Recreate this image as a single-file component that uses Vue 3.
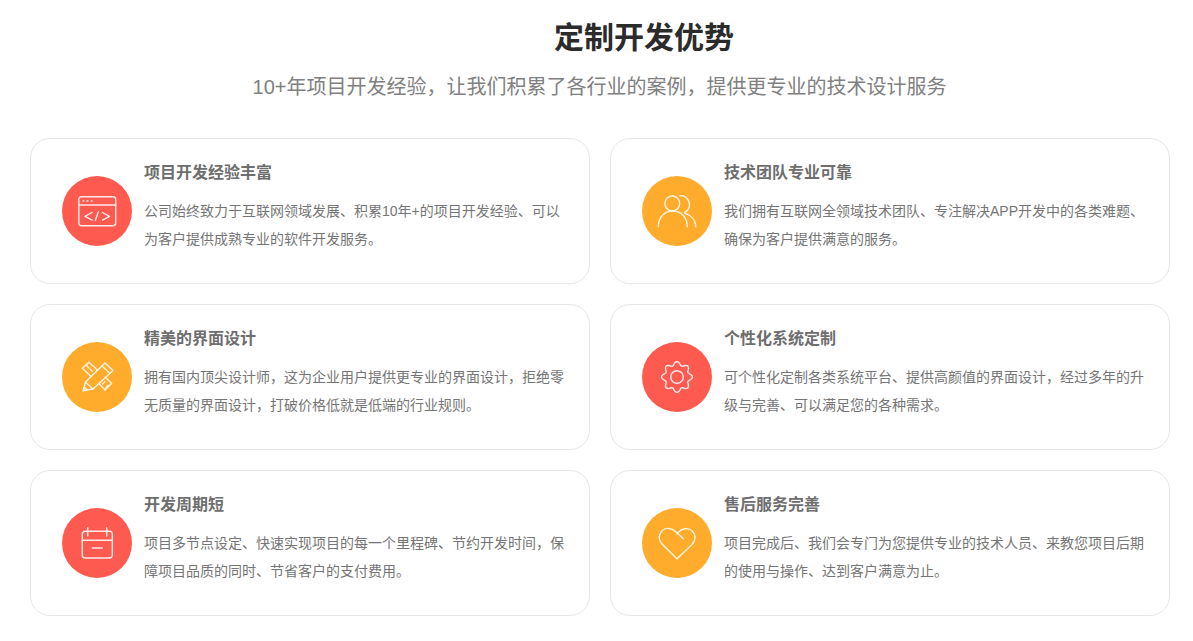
<template>
  <section class="advantage">
    <h2 class="heading">定制开发优势</h2>
    <p class="subheading">10+年项目开发经验，让我们积累了各行业的案例，提供更专业的技术设计服务</p>
    <div class="grid">
      <div class="card" v-for="item in items" :key="item.title">
        <div class="icon" :class="item.color">
          <svg viewBox="0 0 40 40" fill="none" stroke="#fff" stroke-width="1.4" stroke-linecap="round" stroke-linejoin="round" opacity="0.88">
            <path v-for="(d, i) in item.paths" :key="i" :d="d" />
          </svg>
        </div>
        <div class="body">
          <h3 class="title">{{ item.title }}</h3>
          <p class="desc">{{ item.desc }}</p>
        </div>
      </div>
    </div>
  </section>
</template>

<script setup>
// wavy outline for the gear icon
function gearPath(cx, cy, lobes) {
  const pts = []
  for (let i = 0; i < 120; i++) {
    const a = (i / 120) * Math.PI * 2
    const r = 13.6 + 1.8 * Math.cos(lobes * a)
    pts.push(`${(cx + r * Math.cos(a)).toFixed(2)} ${(cy + r * Math.sin(a)).toFixed(2)}`)
  }
  return `M${pts.join('L')}Z`
}

const items = [
  {
    title: '项目开发经验丰富',
    desc: '公司始终致力于互联网领域发展、积累10年+的项目开发经验、可以为客户提供成熟专业的软件开发服务。',
    color: 'red',
    paths: [
      'M4.500 5.700h31.500a2.700 2.700 0 0 1 2.700 2.700v23.600a2.700 2.700 0 0 1-2.700 2.700H4.500a2.700 2.700 0 0 1-2.700-2.700V8.400a2.700 2.700 0 0 1 2.700-2.700z',
      'M1.800 14h36.900',
      'M6 10h1M10 10h1M14.300 10h1',
      'M15 21.500l-7 3.800 7 3.800',
      'M25.500 21.500l7 3.800-7 3.800',
      'M21.300 21l-3 8.500'
    ]
  },
  {
    title: '技术团队专业可靠',
    desc: '我们拥有互联网全领域技术团队、专注解决APP开发中的各类难题、确保为客户提供满意的服务。',
    color: 'orange',
    paths: [
      'M15.300 5a7.400 7.400 0 1 1 0 14.800a7.400 7.400 0 0 1 0-14.800z',
      'M1.300 35.700C1.300 27 7 20 15.800 20S30.300 27 30.300 35.700',
      'M23 4.700c5-.5 9.500 3.500 9.500 8.800 0 3.500-2 6.500-5 8',
      'M27.500 22c6.500 2 11.200 7 11.200 13.700'
    ]
  },
  {
    title: '精美的界面设计',
    desc: '拥有国内顶尖设计师，这为企业用户提供更专业的界面设计，拒绝零无质量的界面设计，打破价格低就是低端的行业规则。',
    color: 'orange',
    paths: [
      'M6.300 33.700L8.500 25 28 6l8 7.500L16 32z',
      'M8.500 25l7.500 7',
      'M25 9l8 7.500',
      'M6.300 33.700l1-3.600 2.600 2.600z',
      'M20.400 13L12 5.300l-6.700 6 8.800 8.100',
      'M28.200 20.200l6.500 6.100L28 33l-6.100-6.400',
      'M9.500 8.500l2.200 2.200M13 12l2.200 2.200M25.500 27l2.200-2.200M29 30.500l2.200-2.200'
    ]
  },
  {
    title: '个性化系统定制',
    desc: '可个性化定制各类系统平台、提供高颜值的界面设计，经过多年的升级与完善、可以满足您的各种需求。',
    color: 'red',
    paths: [
      gearPath(20, 20, 8),
      'M20 13.700a6.300 6.300 0 1 1 0 12.600a6.300 6.300 0 0 1 0-12.600z'
    ]
  },
  {
    title: '开发周期短',
    desc: '项目多节点设定、快速实现项目的每一个里程碑、节约开发时间，保障项目品质的同时、节省客户的支付费用。',
    color: 'red',
    paths: [
      'M8.300 8.300h24a3 3 0 0 1 3 3V32a3 3 0 0 1-3 3h-24a3 3 0 0 1-3-3V11.300a3 3 0 0 1 3-3z',
      'M5.300 17.300h30',
      'M10.700 4.700V13M29.700 4.700V13',
      'M15.300 25h10'
    ]
  },
  {
    title: '售后服务完善',
    desc: '项目完成后、我们会专门为您提供专业的技术人员、来教您项目后期的使用与操作、达到客户满意为止。',
    color: 'orange',
    paths: [
      'M26.300 15.700L18.500 8.500C15 5 8.500 4 4.800 8 1.200 12 1.500 17.500 5 21l15 14.700L35 21.500c3.800-4 4-9.500.5-13.300C32 4.500 25 4.500 20 10.700'
    ]
  }
]
</script>

<style>
html, body {
  margin: 0;
  background: #fff;
  overflow-x: hidden;
}
</style>

<style scoped>
.advantage {
  width: 1193px;
  height: 641px;
  box-sizing: border-box;
  padding: 17px 0 0 30px;
  font-family: "Liberation Sans", "Noto Sans CJK SC", sans-serif;
  overflow: hidden;
}

.heading {
  margin: 0;
  padding-left: 524px;
  font-size: 30px;
  line-height: 42px;
  font-weight: 700;
  color: #2b2b2b;
}

.subheading {
  margin: 11px 0 0;
  width: 1139px;
  text-align: center;
  font-size: 20px;
  line-height: 34px;
  color: #808080;
}

.grid {
  display: grid;
  grid-template-columns: 560px 560px;
  grid-auto-rows: 146px;
  gap: 20px;
  margin-top: 34px;
}

.card {
  box-sizing: border-box;
  display: flex;
  align-items: center;
  padding: 0 24px 0 31px;
  border: 1px solid #e6e6e6;
  border-radius: 20px;
  background: #fff;
}

.icon {
  flex: none;
  width: 70px;
  height: 70px;
  border-radius: 50%;
  display: flex;
  align-items: center;
  justify-content: center;
}

.icon.red {
  background: #ff5a50;
}

.icon.orange {
  background: #ffab2b;
}

.icon svg {
  width: 40px;
  height: 40px;
}

.body {
  margin-left: 12px;
  flex: 1;
  align-self: flex-start;
  padding-top: 22px;
}

.title {
  margin: 0;
  font-size: 16px;
  line-height: 24px;
  font-weight: 700;
  color: #6e6e6e;
}

.desc {
  margin: 12px 0 0;
  font-size: 14px;
  line-height: 28px;
  color: #757575;
}
</style>
